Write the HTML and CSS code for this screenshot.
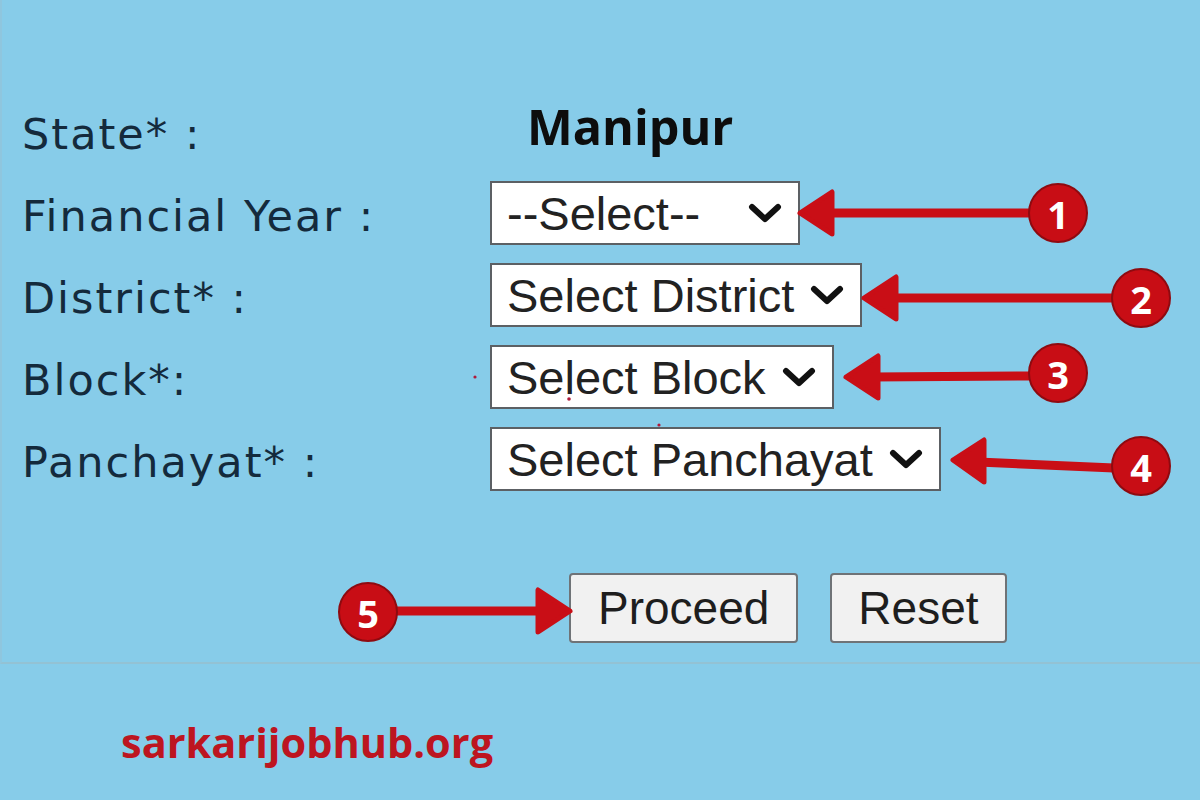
FILE: index.html
```html
<!DOCTYPE html>
<html>
<head>
<meta charset="utf-8">
<link rel="stylesheet" href="styles.css">
</head>
<body>
<div class="panel">
  <div class="form">
    <div class="label">State* :</div>
    <div class="ctrl"><span class="state">Manipur</span></div>

    <div class="label">Financial Year :</div>
    <div class="ctrl">
      <div class="select fixed"><span>--Select--</span>
        <svg class="chev" viewBox="0 0 34 20"><path d="M4 4 L17 16 L30 4"/></svg>
      </div>
    </div>

    <div class="label">District* :</div>
    <div class="ctrl">
      <div class="select"><span>Select District</span>
        <svg class="chev" viewBox="0 0 34 20"><path d="M4 4 L17 16 L30 4"/></svg>
      </div>
    </div>

    <div class="label">Block*:</div>
    <div class="ctrl">
      <div class="select"><span>Select Block</span>
        <svg class="chev" viewBox="0 0 34 20"><path d="M4 4 L17 16 L30 4"/></svg>
      </div>
    </div>

    <div class="label">Panchayat* :</div>
    <div class="ctrl">
      <div class="select"><span>Select Panchayat</span>
        <svg class="chev" viewBox="0 0 34 20"><path d="M4 4 L17 16 L30 4"/></svg>
      </div>
    </div>
  </div>
  <div class="actions">
    <button class="btn proceed">Proceed</button>
    <button class="btn reset">Reset</button>
  </div>
</div>
<div class="footer">sarkarijobhub.org</div>

<svg class="overlay" width="1200" height="800" viewBox="0 0 1200 800">
  <g class="arrow">
    <line x1="1032" y1="213" x2="826" y2="213"/>
    <polygon points="800,213 832,192 832,234"/>
  </g>
  <g class="arrow">
    <line x1="1114" y1="298" x2="890" y2="298"/>
    <polygon points="864,298 896,277 896,319"/>
  </g>
  <g class="arrow">
    <line x1="1032" y1="376" x2="872" y2="377"/>
    <polygon points="846,377 878,356 878,398"/>
  </g>
  <g class="arrow">
    <line x1="1114" y1="468" x2="978" y2="462"/>
    <polygon points="953,460 984,440 984,482"/>
  </g>
  <g class="arrow">
    <line x1="394" y1="611" x2="542" y2="611"/>
    <polygon points="570,611 538,590 538,632"/>
  </g>
  <g class="badge"><circle cx="1058" cy="213" r="29"/><text x="1058" y="214">1</text></g>
  <g class="badge"><circle cx="1141" cy="298" r="29"/><text x="1141" y="299">2</text></g>
  <g class="badge"><circle cx="1058" cy="373" r="29"/><text x="1058" y="374">3</text></g>
  <g class="badge"><circle cx="1141" cy="466" r="29"/><text x="1141" y="467">4</text></g>
  <g class="badge"><circle cx="368" cy="612" r="29"/><text x="368" y="613">5</text></g>
  <circle class="dot" cx="475" cy="377" r="1.6"/>
  <circle class="dot" cx="569" cy="399" r="1.8"/>
  <circle class="dot" cx="659" cy="425" r="1.6"/>
</svg>
</body>
</html>
```
FILE: styles.css
```css
html, body {
  margin: 0;
  padding: 0;
}
body {
  width: 1200px;
  height: 800px;
  background: #87cce9;
  position: relative;
  overflow: hidden;
}
.panel {
  box-sizing: border-box;
  height: 664px;
  padding-top: 90px;
  border-bottom: 2px solid #93c2d4;
  border-left: 2px solid #8fc6de;
}
.form {
  display: grid;
  grid-template-columns: 488px auto;
  grid-auto-rows: 82px;
  align-items: center;
}
.label {
  padding-left: 20px;
  font-family: "DejaVu Sans", Verdana, sans-serif;
  font-size: 43px;
  letter-spacing: 2px;
  color: #142a3c;
  padding-top: 6px;
}
.ctrl {
  display: flex;
  align-items: center;
}
.state {
  margin-left: 37px;
  margin-top: -10px;
  font-family: "Open Sans", sans-serif;
  font-weight: 700;
  font-size: 48.5px;
  color: #0d0d0d;
}
.select {
  box-sizing: border-box;
  height: 64px;
  display: inline-flex;
  align-items: center;
  gap: 16px;
  padding: 0 16px 0 15px;
  background: #ffffff;
  border: 2px solid #5c6064;
  font-family: "Liberation Sans", Arial, sans-serif;
  font-size: 47px;
  color: #222222;
}
.select.fixed {
  width: 310px;
  justify-content: space-between;
}
.chev {
  width: 34px;
  height: 20px;
  flex: none;
}
.chev path {
  fill: none;
  stroke: #111111;
  stroke-width: 6;
  stroke-linecap: round;
  stroke-linejoin: round;
}
.actions {
  display: flex;
  gap: 32px;
  margin-top: 73px;
  padding-left: 567px;
}
.btn {
  box-sizing: border-box;
  height: 70px;
  padding: 0 27px;
  background: #f1f1f1;
  border: 2px solid #6f7377;
  border-radius: 4px;
  font-family: "Liberation Sans", Arial, sans-serif;
  font-size: 46px;
  color: #1e1e1e;
}
.btn.reset {
  padding: 0 26px;
}
.footer {
  margin-top: 50px;
  padding-left: 121px;
  font-family: "Open Sans", sans-serif;
  font-weight: 700;
  font-size: 41.5px;
  color: #bd1520;
}
.overlay {
  position: absolute;
  left: 0;
  top: 0;
  pointer-events: none;
}
.arrow line {
  stroke: #c90e16;
  stroke-width: 9;
}
.arrow polygon {
  fill: #c90e16;
  stroke: #c90e16;
  stroke-width: 5;
  stroke-linejoin: round;
}
.badge circle {
  fill: #c80d15;
  stroke: #8e0a10;
  stroke-width: 2;
}
.badge text {
  fill: #ffffff;
  font-family: "Open Sans", sans-serif;
  font-weight: 700;
  font-size: 38px;
  text-anchor: middle;
  dominant-baseline: central;
}
.dot {
  fill: #b01a3a;
}
```
